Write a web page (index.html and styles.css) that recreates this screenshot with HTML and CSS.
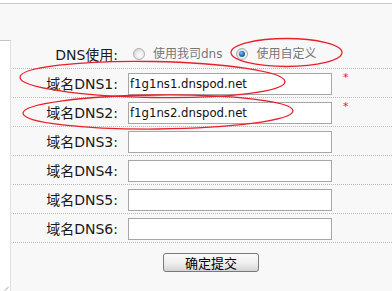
FILE: index.html
```html
<!DOCTYPE html>
<html lang="zh-CN">
<head>
<meta charset="utf-8">
<link rel="stylesheet" href="styles.css">
</head>
<body>
<div class="topbar"></div>
<div class="main">
  <div class="side"></div>
  <div class="content">
    <div class="form">
      <div class="row">
        <div class="label">DNS使用:</div>
        <div class="field radios">
          <span class="radio"></span><span class="rlabel first">使用我司dns</span>
          <span class="radio checked"></span><span class="rlabel">使用自定义</span>
        </div>
      </div>
      <div class="row">
        <div class="label">域名DNS1:</div>
        <div class="field"><div class="input">f1g1ns1.dnspod.net</div><span class="req">*</span></div>
      </div>
      <div class="row">
        <div class="label">域名DNS2:</div>
        <div class="field"><div class="input">f1g1ns2.dnspod.net</div><span class="req">*</span></div>
      </div>
      <div class="row">
        <div class="label">域名DNS3:</div>
        <div class="field"><div class="input"></div></div>
      </div>
      <div class="row">
        <div class="label">域名DNS4:</div>
        <div class="field"><div class="input"></div></div>
      </div>
      <div class="row">
        <div class="label">域名DNS5:</div>
        <div class="field"><div class="input"></div></div>
      </div>
      <div class="row">
        <div class="label">域名DNS6:</div>
        <div class="field"><div class="input"></div></div>
      </div>
      <div class="actions">
        <button class="btn">确定提交</button>
      </div>
    </div>
  </div>
</div>
<svg class="marks" width="392" height="291" viewBox="0 0 392 291">
  <ellipse cx="286.5" cy="52.5" rx="55.5" ry="14" fill="none" stroke="#e8202c" stroke-width="1.3"/>
  <ellipse cx="152.5" cy="79.5" rx="132.5" ry="18" transform="rotate(1 152.5 79.5)" fill="none" stroke="#e8202c" stroke-width="1.3"/>
  <ellipse cx="158" cy="112" rx="135" ry="17" transform="rotate(-0.5 158 112)" fill="none" stroke="#e8202c" stroke-width="1.3"/>
  <line x1="5" y1="290.5" x2="8.5" y2="287" stroke="#999" stroke-width="1"/>
</svg>
</body>
</html>
```

FILE: styles.css
```css
html, body {
  margin: 0;
  padding: 0;
}
body {
  width: 392px;
  height: 291px;
  overflow: hidden;
  position: relative;
  background: #f8f8f8;
  font-family: "DejaVu Sans", "Noto Sans CJK SC", sans-serif;
  color: #1a1a1a;
}
.topbar {
  height: 3px;
  background: #ffffff;
  border-bottom: 1px solid #c8c8c8;
}
.main {
  display: flex;
  height: 287px;
}
.side {
  width: 10px;
  margin-top: 36px;
  background: #ffffff;
  border-top: 1px solid #c4c4c4;
  border-right: 1px solid #e0e0e0;
}
.content {
  flex: 1;
  padding-top: 36px;
  padding-left: 2px;
}
.row {
  display: flex;
  align-items: center;
  height: 28px;
  border-bottom: 1px dotted #b8b8b8;
}
.label {
  width: 105px;
  text-align: right;
  font-size: 14px;
  line-height: 16px;
  padding-top: 1px;
}
.field {
  display: flex;
  align-items: center;
  margin-left: 10px;
  padding-top: 2px;
}
.input {
  box-sizing: border-box;
  width: 204px;
  height: 22px;
  border: 1px solid #a6a6a6;
  background: #ffffff;
  font-family: "DejaVu Sans Condensed", "DejaVu Sans", sans-serif;
  font-size: 13px;
  line-height: 20px;
  padding-left: 1px;
  color: #111;
}
.req {
  align-self: flex-start;
  margin-left: 11px;
  margin-top: -1px;
  color: #ee1133;
  font-size: 11px;
  line-height: 11px;
}
.radios {
  padding-top: 0;
  margin-left: 15px;
}
.radio {
  box-sizing: border-box;
  width: 12px;
  height: 12px;
  border-radius: 50%;
  border: 1px solid #b0b0b0;
  background: radial-gradient(circle at 60% 60%, #ffffff 0%, #f0f0f0 35%, #c8c8c8 100%);
  position: relative;
}
.radio.checked::after {
  content: "";
  position: absolute;
  left: 2px;
  top: 2px;
  width: 6px;
  height: 6px;
  border-radius: 50%;
  background: radial-gradient(circle at 40% 35%, #7fc4f0 0%, #1f78c0 45%, #0a3f78 100%);
}
.rlabel {
  font-size: 12px;
  line-height: 14px;
  color: #777;
  margin-left: 8px;
}
.rlabel.first {
  margin-right: 14px;
}
.actions {
  padding-top: 10px;
  padding-left: 150px;
}
.btn {
  box-sizing: border-box;
  width: 96px;
  height: 19px;
  padding: 0;
  border: 1px solid #7a7a7a;
  border-radius: 3px;
  background: linear-gradient(to bottom, #fbfbfb 0%, #eeeeee 55%, #d4d4d4 100%);
  font-family: "Noto Sans CJK SC", sans-serif;
  font-size: 13px;
  line-height: 17px;
  color: #000;
}
.marks {
  position: absolute;
  left: 0;
  top: 0;
  pointer-events: none;
}
```
